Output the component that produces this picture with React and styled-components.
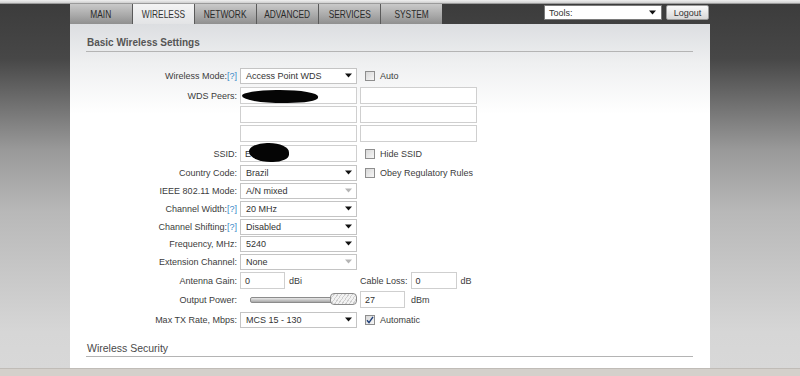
import React from "react";
import styled, { createGlobalStyle, css } from "styled-components";

const GlobalStyle = createGlobalStyle`
  html, body {
    margin: 0;
    padding: 0;
    height: 376px;
    overflow: hidden;
    font-family: "Liberation Sans", Arial, sans-serif;
  }
  #root {
    height: 376px;
  }
`;

const Page = styled.div`
  height: 376px;
  display: flex;
  flex-direction: column;
`;

const BrowserStrip = styled.div`
  height: 4px;
  background: linear-gradient(#f0f0f0, #cfcfcf);
  border-bottom: 1px solid #9a9a9a;
  box-sizing: border-box;
`;

const Backdrop = styled.div`
  flex: 1;
  display: flex;
  flex-direction: column;
  padding-left: 70px;
  background: linear-gradient(
    #3c3c3c 0%,
    #474747 15%,
    #999999 40%,
    #b8b8b8 57%,
    #d6d6d6 90%,
    #d8d8d8 100%
  );
  min-height: 0;
`;

const Container = styled.div`
  width: 640px;
  flex: 1;
  display: flex;
  flex-direction: column;
  min-height: 0;
`;

const HeaderBar = styled.div`
  height: 20px;
  display: flex;
  align-items: stretch;
`;

const Tabs = styled.div`
  display: flex;
`;

const Tab = styled.div`
  width: 62px;
  display: flex;
  align-items: center;
  justify-content: center;
  font-size: 11px;
  color: #2a2a2a;
  border-left: 1px solid #5a5a5a;
  box-sizing: border-box;
  background: linear-gradient(#c9c9c9, #a7a7a7 60%, #8f8f8f);
  ${(p) =>
    p.$active &&
    css`
      background: linear-gradient(#f4f4f4, #e3e4e6);
      color: #333;
    `}
  &:first-child {
    border-left: none;
  }
`;

const TabText = styled.span`
  display: inline-block;
  transform: scaleX(0.76);
  white-space: nowrap;
`;

const Tools = styled.div`
  margin-left: auto;
  display: flex;
  align-items: flex-start;
  gap: 4px;
  padding-top: 1px;
`;

const ToolsSelect = styled.div`
  width: 118px;
  height: 15px;
  background: #fff;
  border: 1px solid #7a7a7a;
  box-sizing: border-box;
  display: flex;
  align-items: center;
  padding: 0 5px 0 4px;
  font-size: 9px;
  color: #333;
  justify-content: space-between;
`;

const LogoutButton = styled.div`
  width: 43px;
  height: 15px;
  box-sizing: border-box;
  border: 1px solid #9a9a9a;
  border-radius: 2px;
  background: linear-gradient(#fafafa, #d8d8d8);
  font-size: 9px;
  color: #333;
  display: flex;
  align-items: center;
  justify-content: center;
  margin-right: 1px;
`;

const Panel = styled.div`
  flex: 1;
  background: linear-gradient(#dcdee1 0px, #eff0f1 40px, #ffffff 90px);
  padding: 13px 17px 0 16px;
  min-height: 0;
`;

const SectionTitle = styled.div`
  font-size: ${(p) => (p.$light ? "10.5px" : "10px")};
  font-weight: ${(p) => (p.$light ? "normal" : "bold")};
  color: ${(p) => (p.$light ? "#4a4a4a" : "#555")};
  padding: 0 0 2px 1px;
  border-bottom: 1px solid #b4b4b4;
  line-height: 12px;
`;

const Form = styled.div`
  display: flex;
  flex-direction: column;
  padding: 15px 0 14px;
`;

const Row = styled.div`
  display: grid;
  grid-template-columns: 151px 117px auto;
  column-gap: 3px;
  height: 17px;
  margin-top: ${(p) => p.$gap ?? 0}px;
  align-items: center;
  font-size: 9px;
  color: #3c3c3c;
`;

const Label = styled.div`
  text-align: right;
  white-space: nowrap;
`;

const Help = styled.span`
  color: #3a8ac8;
`;

const Select = styled.div`
  height: 16px;
  box-sizing: border-box;
  border: 1px solid #c4c4c4;
  background: #fff;
  display: flex;
  align-items: center;
  justify-content: space-between;
  padding: 0 4px 0 5px;
  color: #333;
`;

const TextBox = styled.div`
  position: relative;
  width: ${(p) => p.$w || 117}px;
  height: 17px;
  box-sizing: border-box;
  border: 1px solid #cfcfcf;
  background: #fff;
  display: flex;
  align-items: center;
  padding-left: 4px;
  color: #333;
`;

const Redacted = styled.span`
  position: absolute;
  background: #050505;
  border-radius: 45% 50% 40% 55%;
  left: ${(p) => p.$left}px;
  top: ${(p) => p.$top}px;
  width: ${(p) => p.$w}px;
  height: ${(p) => p.$h}px;
`;

const Inline = styled.div`
  display: flex;
  align-items: center;
  gap: ${(p) => p.$gap ?? 4}px;
`;

const CheckWrap = styled.label`
  display: flex;
  align-items: center;
  gap: 5px;
  padding-left: 5px;
  color: #3c3c3c;
  white-space: nowrap;
`;

const Box = styled.span`
  width: 10px;
  height: 10px;
  box-sizing: border-box;
  border: 1px solid #8e8e8e;
  background: linear-gradient(135deg, #d8d8d8, #f6f6f6);
  display: flex;
  align-items: center;
  justify-content: center;
`;

const Unit = styled.span`
  color: #3c3c3c;
  margin-left: ${(p) => p.$ml || 0}px;
`;

const SliderArea = styled.div`
  position: relative;
  height: 17px;
  display: flex;
  align-items: center;
  padding-left: 10px;
`;

const Track = styled.div`
  width: 86px;
  height: 4px;
  border: 1px solid #8c8c8c;
  border-radius: 2px;
  background: linear-gradient(#e8e8e8, #a8a8a8);
`;

const Handle = styled.div`
  position: absolute;
  right: 0;
  top: 2px;
  width: 27px;
  height: 12px;
  box-sizing: border-box;
  border: 1px solid #8a8a8a;
  border-radius: 4px;
  background: repeating-linear-gradient(
      -55deg,
      #f2f2f2 0 2px,
      #cfcfcf 2px 3px
    );
`;

const StatusBar = styled.div`
  height: 8px;
  background: #d4d0cb;
  border-top: 1px solid #c0bcb7;
  box-sizing: border-box;
`;

const Arrow = ({ faded }) => (
  <svg width="7" height="5" viewBox="0 0 7 5">
    <path d="M0 0.5 H7 L3.5 4.5 Z" fill={faded ? "#b5b5b5" : "#111"} />
  </svg>
);

const Check = () => (
  <svg width="8" height="8" viewBox="0 0 8 8">
    <path d="M1 4.2 L3 6.6 L7 0.8" stroke="#1f3f7a" strokeWidth="1.4" fill="none" />
  </svg>
);

const Checkbox = ({ checked, children }) => (
  <CheckWrap>
    <Box>{checked && <Check />}</Box>
    {children}
  </CheckWrap>
);

const Drop = ({ value, disabled }) => (
  <Select>
    <span>{value}</span>
    <Arrow faded={disabled} />
  </Select>
);

const tabs = ["MAIN", "WIRELESS", "NETWORK", "ADVANCED", "SERVICES", "SYSTEM"];

export default function App() {
  return (
    <Page>
      <GlobalStyle />
      <BrowserStrip />
      <Backdrop>
        <Container>
          <HeaderBar>
            <Tabs>
              {tabs.map((t) => (
                <Tab key={t} $active={t === "WIRELESS"}>
                  <TabText>{t}</TabText>
                </Tab>
              ))}
            </Tabs>
            <Tools>
              <ToolsSelect>
                <span>Tools:</span>
                <Arrow />
              </ToolsSelect>
              <LogoutButton>Logout</LogoutButton>
            </Tools>
          </HeaderBar>
          <Panel>
            <SectionTitle>Basic Wireless Settings</SectionTitle>
            <Form>
              <Row>
                <Label>
                  Wireless Mode:<Help>[?]</Help>
                </Label>
                <Drop value="Access Point WDS" />
                <Checkbox>Auto</Checkbox>
              </Row>
              <Row $gap={3}>
                <Label>WDS Peers:</Label>
                <TextBox>
                  <Redacted $left={1} $top={2} $w={76} $h={13} />
                </TextBox>
                <TextBox />
              </Row>
              <Row $gap={2}>
                <Label />
                <TextBox />
                <TextBox />
              </Row>
              <Row $gap={2}>
                <Label />
                <TextBox />
                <TextBox />
              </Row>
              <Row $gap={3}>
                <Label>SSID:</Label>
                <TextBox>
                  E
                  <Redacted $left={8} $top={-3} $w={40} $h={19} />
                </TextBox>
                <Checkbox>Hide SSID</Checkbox>
              </Row>
              <Row $gap={2}>
                <Label>Country Code:</Label>
                <Drop value="Brazil" />
                <Checkbox>Obey Regulatory Rules</Checkbox>
              </Row>
              <Row $gap={1}>
                <Label>IEEE 802.11 Mode:</Label>
                <Drop value="A/N mixed" disabled />
                <span />
              </Row>
              <Row $gap={1}>
                <Label>
                  Channel Width:<Help>[?]</Help>
                </Label>
                <Drop value="20 MHz" />
                <span />
              </Row>
              <Row $gap={1}>
                <Label>
                  Channel Shifting:<Help>[?]</Help>
                </Label>
                <Drop value="Disabled" />
                <span />
              </Row>
              <Row $gap={0}>
                <Label>Frequency, MHz:</Label>
                <Drop value="5240" />
                <span />
              </Row>
              <Row $gap={1}>
                <Label>Extension Channel:</Label>
                <Drop value="None" disabled />
                <span />
              </Row>
              <Row $gap={2}>
                <Label>Antenna Gain:</Label>
                <Inline>
                  <TextBox $w={45}>0</TextBox>
                  <Unit>dBi</Unit>
                </Inline>
                <Inline $gap={3}>
                  <Label>Cable Loss:</Label>
                  <TextBox $w={46}>0</TextBox>
                  <Unit $ml={1}>dB</Unit>
                </Inline>
              </Row>
              <Row $gap={2}>
                <Label>Output Power:</Label>
                <SliderArea>
                  <Track />
                  <Handle />
                </SliderArea>
                <Inline $gap={6}>
                  <TextBox $w={45}>27</TextBox>
                  <Unit>dBm</Unit>
                </Inline>
              </Row>
              <Row $gap={3}>
                <Label>Max TX Rate, Mbps:</Label>
                <Drop value="MCS 15 - 130" />
                <Checkbox checked>Automatic</Checkbox>
              </Row>
            </Form>
            <SectionTitle $light>Wireless Security</SectionTitle>
          </Panel>
        </Container>
      </Backdrop>
      <StatusBar />
    </Page>
  );
}
